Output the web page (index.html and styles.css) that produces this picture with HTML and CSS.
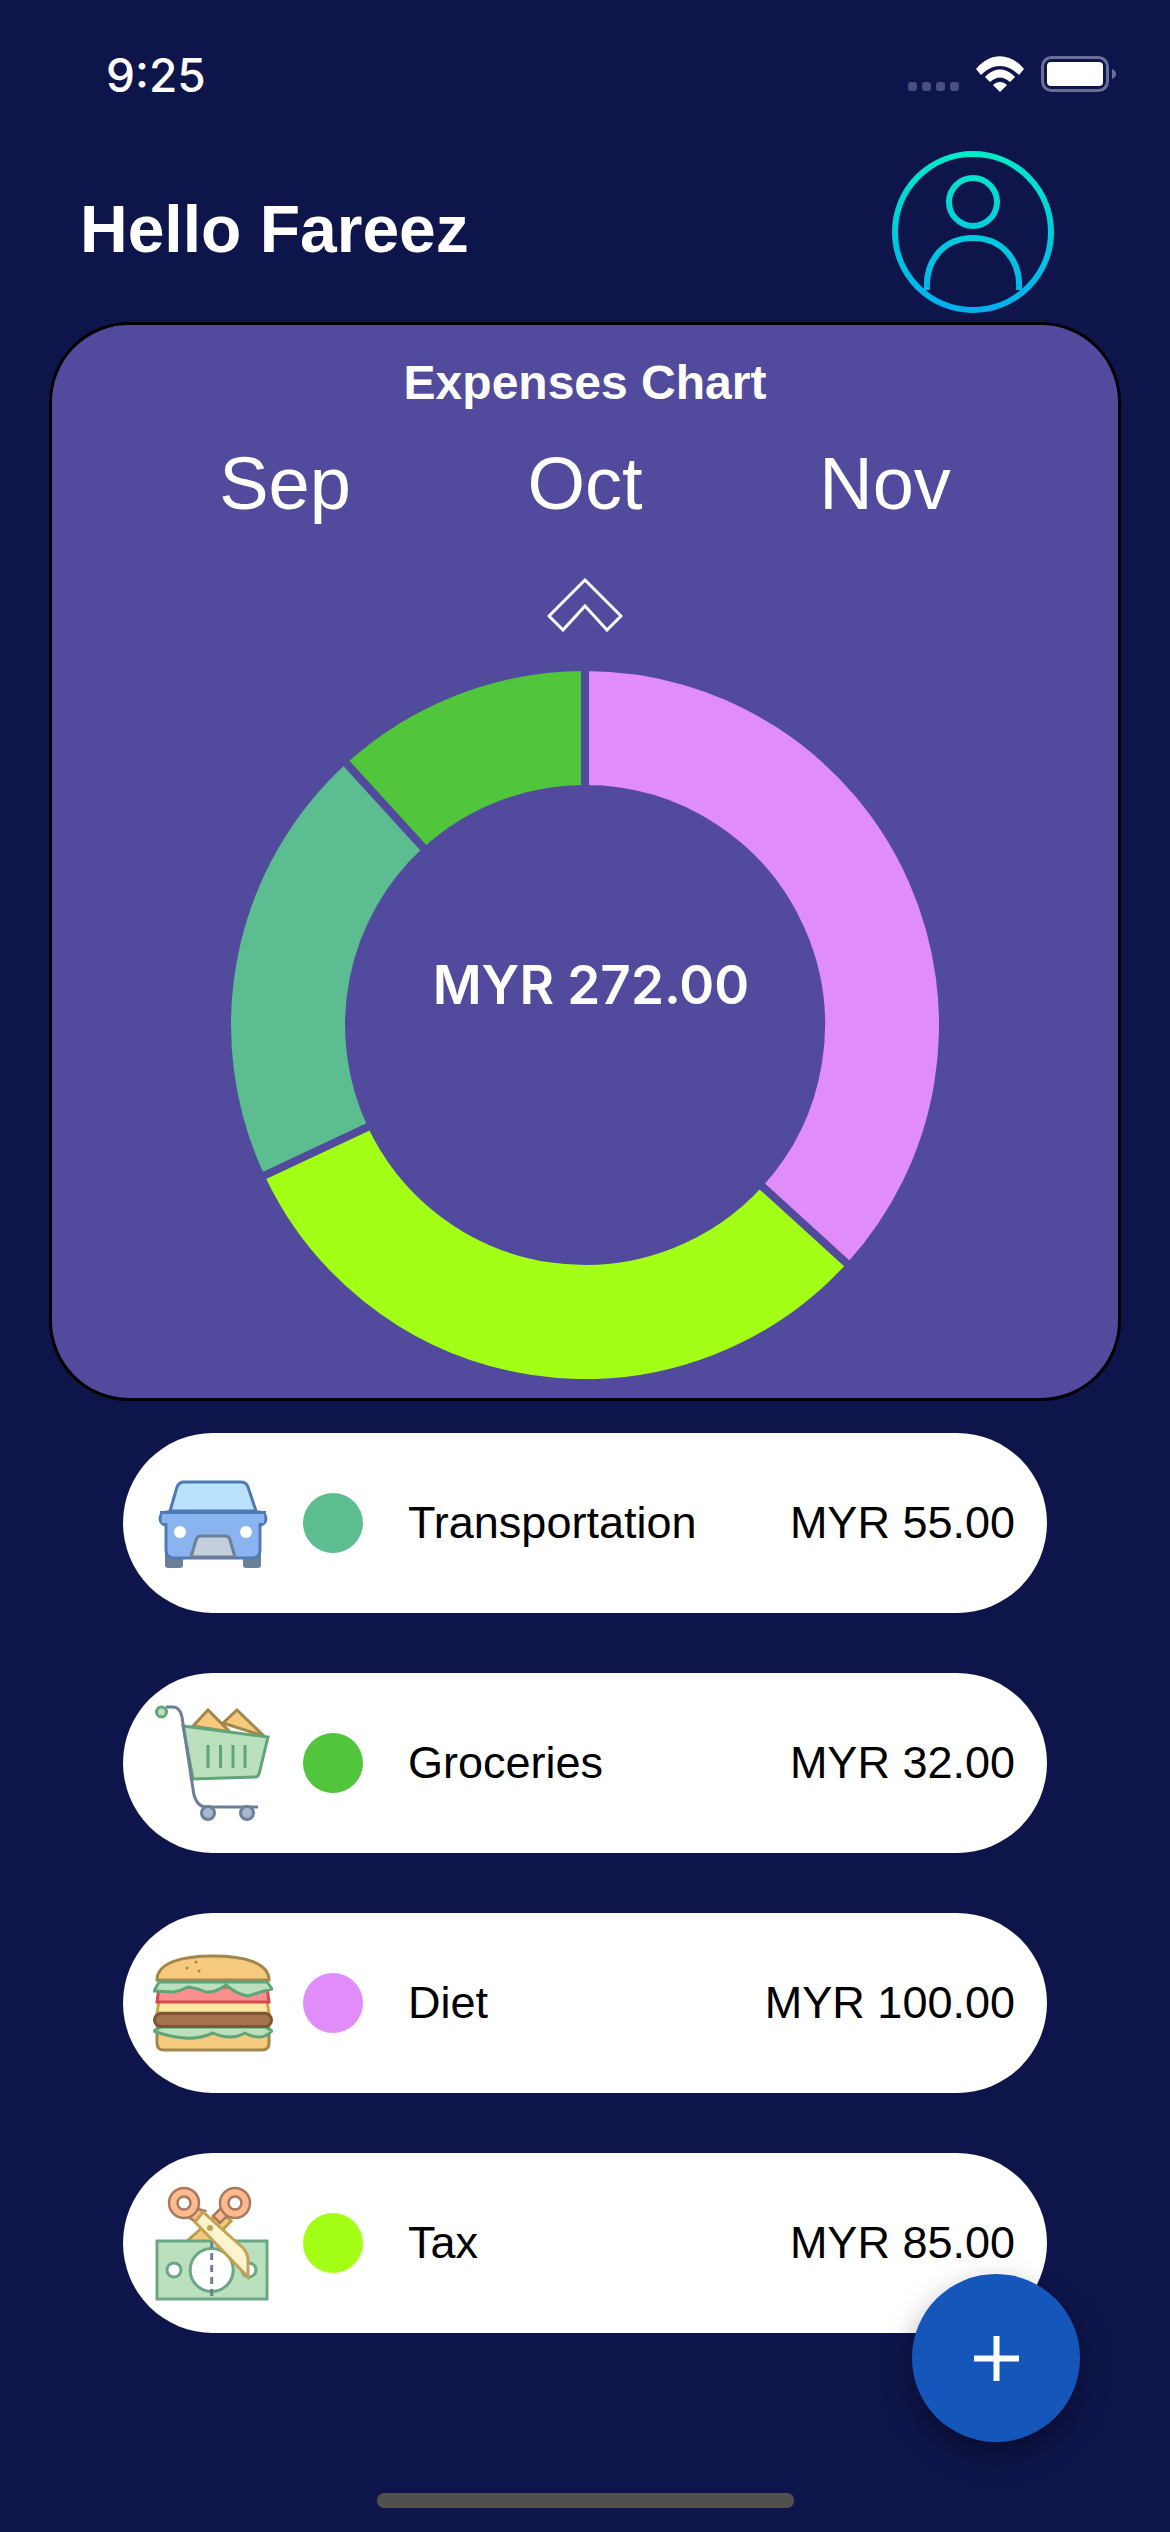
FILE: index.html
```html
<!DOCTYPE html>
<html lang="en">
<head>
    <meta charset="UTF-8">
    <meta name="viewport" content="width=device-width, initial-scale=1.0">
    <title>Expenses</title>
    <link rel="stylesheet" href="styles.css">
</head>
<body>
    <div class="phone">
        <div class="status-bar">
            <span class="time">9:25</span>
            <div class="status-icons">
                <div class="signal"><i></i><i></i><i></i><i></i></div>
                <svg class="wifi" width="48" height="36" viewBox="0 0 48 36">
                    <path d="M0 13 C14 -4 34 -4 48 13 L43 19 C31 7 17 7 5 19 Z" fill="#fff"/>
                    <path d="M9 23 C18 13 30 13 39 23 L34 28 C27 22 21 22 14 28 Z" fill="#fff" transform="translate(0 -2)"/>
                    <path d="M17 29 C21 25 27 25 31 29 L24 36 Z" fill="#fff"/>
                </svg>
                <svg class="battery" width="76" height="36" viewBox="0 0 76 36">
                    <rect x="1.5" y="1.5" width="65" height="33" rx="9" fill="none" stroke="#6a6f96" stroke-width="3"/>
                    <rect x="6" y="6" width="56" height="24" rx="4" fill="#fff"/>
                    <path d="M71 13 C74 14 75 16 75 18 C75 20 74 22 71 23 Z" fill="#6a6f96"/>
                </svg>
            </div>
        </div>

        <header class="header">
            <h1>Hello Fareez</h1>
            <svg class="avatar" width="162" height="162" viewBox="0 0 162 162">
                <defs>
                    <linearGradient id="avatarGrad" gradientUnits="userSpaceOnUse" x1="0" y1="0" x2="0" y2="162">
                        <stop offset="0" stop-color="#00ebc8"/>
                        <stop offset="1" stop-color="#00aeef"/>
                    </linearGradient>
                </defs>
                <g fill="none" stroke="url(#avatarGrad)" stroke-width="6">
                    <circle cx="81" cy="81" r="78"/>
                    <circle cx="81" cy="51" r="24"/>
                    <path d="M35 139 C33 108 53 87 81 87 C109 87 129 108 127 139"/>
                </g>
            </svg>
        </header>

        <section class="chart-card">
            <h2>Expenses Chart</h2>
            <div class="months">
                <span>Sep</span>
                <span>Oct</span>
                <span>Nov</span>
            </div>
            <svg class="chevron" width="76" height="54" viewBox="0 0 76 54">
                <path d="M38 2 L74 38 L60 52 L38 28 L16 52 L2 38 Z" fill="none" stroke="#fff" stroke-width="3"/>
            </svg>
            <div class="donut">
                <svg width="708" height="708" viewBox="-354 -354 708 708">
                    <g fill="none" stroke-width="114">
                        <path d="M0 -297 A297 297 0 0 1 219.6 200" stroke="#e08dfa"/>
                        <path d="M219.6 200 A297 297 0 0 1 -268.8 126.2" stroke="#a2ff15"/>
                        <path d="M-268.8 126.2 A297 297 0 0 1 -200.1 -219.5" stroke="#5cbe90"/>
                        <path d="M-200.1 -219.5 A297 297 0 0 1 0 -297" stroke="#51c53b"/>
                    </g>
                    <g stroke="#514a9d" stroke-width="8">
                        <line x1="0" y1="0" x2="0" y2="-360"/>
                        <line x1="0" y1="0" x2="266.2" y2="242.4"/>
                        <line x1="0" y1="0" x2="-325.9" y2="153"/>
                        <line x1="0" y1="0" x2="-242.6" y2="-266"/>
                    </g>
                    <circle r="236" fill="#514a9d"/>
                </svg>
                <div class="donut-total">MYR 272.00</div>
            </div>
        </section>

        <div class="expense-list">
            <div class="expense">
                <svg class="expense-icon" width="120" height="120" viewBox="0 0 120 120">
                    <path d="M17 48 L24 24 Q26 19 31 19 L88 19 Q93 19 95 24 L103 48 Z" fill="#bbe3ff" stroke="#4e7ab5" stroke-width="3"/>
                    <rect x="12" y="88" width="18" height="17" rx="3" fill="#6c7f99"/>
                    <rect x="90" y="88" width="18" height="17" rx="3" fill="#6c7f99"/>
                    <rect x="7" y="49" width="106" height="13" rx="6.5" fill="#8ab4f0" stroke="#4e7ab5" stroke-width="3"/>
                    <path d="M13 52 H107 V87 Q107 95 99 95 H21 Q13 95 13 87 Z" fill="#8ab4f0" stroke="#4e7ab5" stroke-width="3"/>
                    <path d="M9 51 H111 V60 H9 Z" fill="#8ab4f0"/>
                    <path d="M7 49.5 H113" fill="none" stroke="#4e7ab5" stroke-width="3"/>
                    <circle cx="27" cy="69" r="6" fill="#fff"/>
                    <circle cx="93" cy="69" r="6" fill="#fff"/>
                    <path d="M38 94 L43 77 Q44 73 48 73 L72 73 Q76 73 77 77 L82 94 Z" fill="#c3cfdc" stroke="#6c7f99" stroke-width="3"/>
                </svg>
                <span class="dot dot-transport"></span>
                <span class="expense-name">Transportation</span>
                <span class="expense-amount">MYR 55.00</span>
            </div>

            <div class="expense">
                <svg class="expense-icon" width="120" height="120" viewBox="0 0 120 120">
                    <path d="M40 23 L55 7 L77 29 Z" fill="#f5ca7f" stroke="#a38649" stroke-width="3"/>
                    <path d="M70 20 L84 7 L111 33 Z" fill="#f5ca7f" stroke="#a38649" stroke-width="3"/>
                    <path d="M30 23 L115 34 L106 71 Q105 74 102 74 L40 76 Z" fill="#bbe0be" stroke="#5fa578" stroke-width="3"/>
                    <g stroke="#5fa578" stroke-width="3">
                        <line x1="55" y1="42" x2="55" y2="65"/>
                        <line x1="67.5" y1="42" x2="67.5" y2="65"/>
                        <line x1="80" y1="42" x2="80" y2="65"/>
                        <line x1="92" y1="42" x2="92" y2="65"/>
                    </g>
                    <path d="M13 4 H20 Q27 4 29 14 L40 86 Q42 104 54 104 H105" fill="none" stroke="#6c7f99" stroke-width="3"/>
                    <circle cx="8.5" cy="9" r="5" fill="#bbe0be" stroke="#5fa578" stroke-width="3"/>
                    <circle cx="55" cy="110" r="6.5" fill="#a8b8cd" stroke="#6c7f99" stroke-width="3"/>
                    <circle cx="94" cy="110" r="6.5" fill="#a8b8cd" stroke="#6c7f99" stroke-width="3"/>
                </svg>
                <span class="dot dot-groceries"></span>
                <span class="expense-name">Groceries</span>
                <span class="expense-amount">MYR 32.00</span>
            </div>

            <div class="expense">
                <svg class="expense-icon" width="120" height="120" viewBox="0 0 120 120">
                    <path d="M4 37 C4 20 28 13 60 13 C92 13 116 20 116 37 Z" fill="#f5ca7f" stroke="#a38649" stroke-width="3"/>
                    <circle cx="34" cy="25" r="1.5" fill="#a38649"/>
                    <circle cx="43" cy="19" r="1.5" fill="#a38649"/>
                    <circle cx="46" cy="28" r="1.5" fill="#a38649"/>
                    <path d="M4 85 H116 V100 Q116 107 109 107 H11 Q4 107 4 100 Z" fill="#f5ca7f" stroke="#a38649" stroke-width="3"/>
                    <path d="M6 58 L8 46 H112 L114 58 L116 70 H4 Z" fill="#fde89f" stroke="#c9a650" stroke-width="3"/>
                    <path d="M6 44 H114 L116 59 H4 Z" fill="#fa8f8f" stroke="#d9484f" stroke-width="3"/>
                    <path d="M6 39 H114 L119 46 Q107 49 95 53 Q85 52 73 42 Q62 50 53 49 Q44 45 35 44 Q27 48 20 49 L1 48 Z" fill="#bbe0be" stroke="#5fa578" stroke-width="3"/>
                    <path d="M1 88 L8 84 H112 L119 88 Q113 94 107 94 Q98 94 92 90 Q85 94 77 94 Q68 94 60 90 Q46 96 32 95 Q16 94 1 88 Z" fill="#bbe0be" stroke="#5fa578" stroke-width="3"/>
                    <rect x="1.5" y="70.5" width="117" height="13" rx="6.5" fill="#a5724e" stroke="#7d5537" stroke-width="3"/>
                </svg>
                <span class="dot dot-diet"></span>
                <span class="expense-name">Diet</span>
                <span class="expense-amount">MYR 100.00</span>
            </div>

            <div class="expense">
                <svg class="expense-icon" width="120" height="120" viewBox="0 0 120 120">
                    <path d="M68 28 L78 38 L58 59 L33 59 Z" fill="#f5ca7f" stroke="#b89c4f" stroke-width="3"/>
                    <rect x="4" y="58" width="110" height="58" fill="#bbe0be" stroke="#6aa684" stroke-width="3"/>
                    <circle cx="58.7" cy="87" r="21.5" fill="#fff" stroke="#6aa684" stroke-width="3"/>
                    <circle cx="21" cy="87" r="7" fill="#fff" stroke="#6aa684" stroke-width="3"/>
                    <circle cx="96" cy="87" r="7" fill="#fff" stroke="#6aa684" stroke-width="3"/>
                    <line x1="58.7" y1="58" x2="58.7" y2="116" stroke="#6c7f99" stroke-width="3" stroke-dasharray="7 5"/>
                    <path d="M69 24 L76 31 L67 40 L60 33 Z" fill="#ffb98f" stroke="#a8785c" stroke-width="2.5"/>
                    <circle cx="82" cy="20" r="15" fill="#ffb98f" stroke="#a8785c" stroke-width="2.5"/>
                    <circle cx="82" cy="20" r="6.5" fill="#fff" stroke="#a8785c" stroke-width="2.5"/>
                    <path d="M38 24 L52 28 L43 39 L32 32 Z" fill="#ffb98f" stroke="#a8785c" stroke-width="2.5"/>
                    <circle cx="31" cy="20" r="15" fill="#ffb98f" stroke="#a8785c" stroke-width="2.5"/>
                    <circle cx="31" cy="20" r="6.5" fill="#fff" stroke="#a8785c" stroke-width="2.5"/>
                    <path d="M50 29 L42 39 L95 94 L95 75 Q94 69 90 65 Z" fill="#fdf3cf" stroke="#c3a352" stroke-width="3"/>
                    <circle cx="57" cy="45" r="3" fill="#c3a352"/>
                </svg>
                <span class="dot dot-tax"></span>
                <span class="expense-name">Tax</span>
                <span class="expense-amount">MYR 85.00</span>
            </div>
        </div>

        <button class="add-btn">
            <svg width="45" height="45" viewBox="0 0 45 45">
                <path d="M19.5 0 H25.5 V19.5 H45 V25.5 H25.5 V45 H19.5 V25.5 H0 V19.5 H19.5 Z" fill="#fff"/>
            </svg>
        </button>
        <div class="home-indicator"></div>
    </div>
</body>
</html>
```

FILE: styles.css
```css
* {
    box-sizing: border-box;
}

body {
    margin: 0;
    background-color: #0e154a;
    font-family: "Liberation Sans", Arial, sans-serif;
}

.phone {
    position: relative;
    width: 1170px;
    height: 2532px;
    overflow: hidden;
    background-color: #0e154a;
}

.status-bar {
    display: flex;
    justify-content: space-between;
    align-items: flex-start;
    height: 142px;
    padding: 50px 53px 0 106px;
}

.time {
    font-family: Inter, sans-serif;
    font-size: 46px;
    font-weight: 500;
    line-height: 50px;
    color: white;
}

.status-icons {
    display: flex;
    align-items: flex-start;
    padding-top: 6px;
}

.signal {
    display: flex;
    gap: 5px;
    margin-top: 26px;
    margin-right: 17px;
}

.signal i {
    width: 9px;
    height: 9px;
    border-radius: 3px;
    background-color: #4a4f7c;
}

.wifi {
    margin-right: 17px;
}

.header {
    display: flex;
    justify-content: space-between;
    align-items: center;
    height: 180px;
    padding: 0 116px 0 80px;
}

.header h1 {
    margin: 0 0 6px;
    font-size: 66px;
    font-weight: bold;
    color: white;
}

.chart-card {
    display: flex;
    flex-direction: column;
    align-items: center;
    width: 1072px;
    height: 1079px;
    margin-left: 49px;
    padding-top: 30px;
    background-color: #514a9d;
    border: 3px solid black;
    border-radius: 80px;
}

.chart-card h2 {
    margin: 0;
    font-size: 48px;
    line-height: 56px;
    font-weight: bold;
    color: white;
}

.months {
    display: grid;
    grid-template-columns: repeat(3, 300px);
    margin-top: 30px;
    text-align: center;
    font-size: 74px;
    line-height: 86px;
    color: white;
}

.chevron {
    margin-top: 51px;
}

.donut {
    position: relative;
    width: 708px;
    height: 708px;
    margin-top: 39px;
}

.donut svg {
    display: block;
}

.donut-total {
    position: absolute;
    top: 284px;
    left: 0;
    width: 100%;
    padding-left: 12px;
    text-align: center;
    font-family: Inter, sans-serif;
    font-size: 53px;
    font-weight: 600;
    line-height: 60px;
    color: white;
}

.expense-list {
    display: flex;
    flex-direction: column;
    gap: 60px;
    margin: 32px 123px 0;
}

.expense {
    display: flex;
    align-items: center;
    height: 180px;
    padding: 0 32px 0 30px;
    background-color: white;
    border-radius: 90px;
    font-size: 45px;
    color: black;
}

.expense-icon {
    flex-shrink: 0;
    margin-right: 30px;
}

.dot {
    flex-shrink: 0;
    width: 60px;
    height: 60px;
    margin-right: 45px;
    border-radius: 50%;
}

.dot-transport {
    background-color: #5cbe90;
}

.dot-groceries {
    background-color: #51c53b;
}

.dot-diet {
    background-color: #e08dfa;
}

.dot-tax {
    background-color: #a2ff15;
}

.expense-name {
    flex: 1;
}

.add-btn {
    position: absolute;
    left: 912px;
    top: 2274px;
    display: flex;
    align-items: center;
    justify-content: center;
    width: 168px;
    height: 168px;
    padding: 0;
    border: none;
    border-radius: 50%;
    background-color: #1556bb;
    box-shadow: 0 12px 30px rgba(0,0,0,0.35);
}

.home-indicator {
    position: absolute;
    left: 377px;
    top: 2493px;
    width: 417px;
    height: 15px;
    border-radius: 7px;
    background-color: #505050;
}
```
